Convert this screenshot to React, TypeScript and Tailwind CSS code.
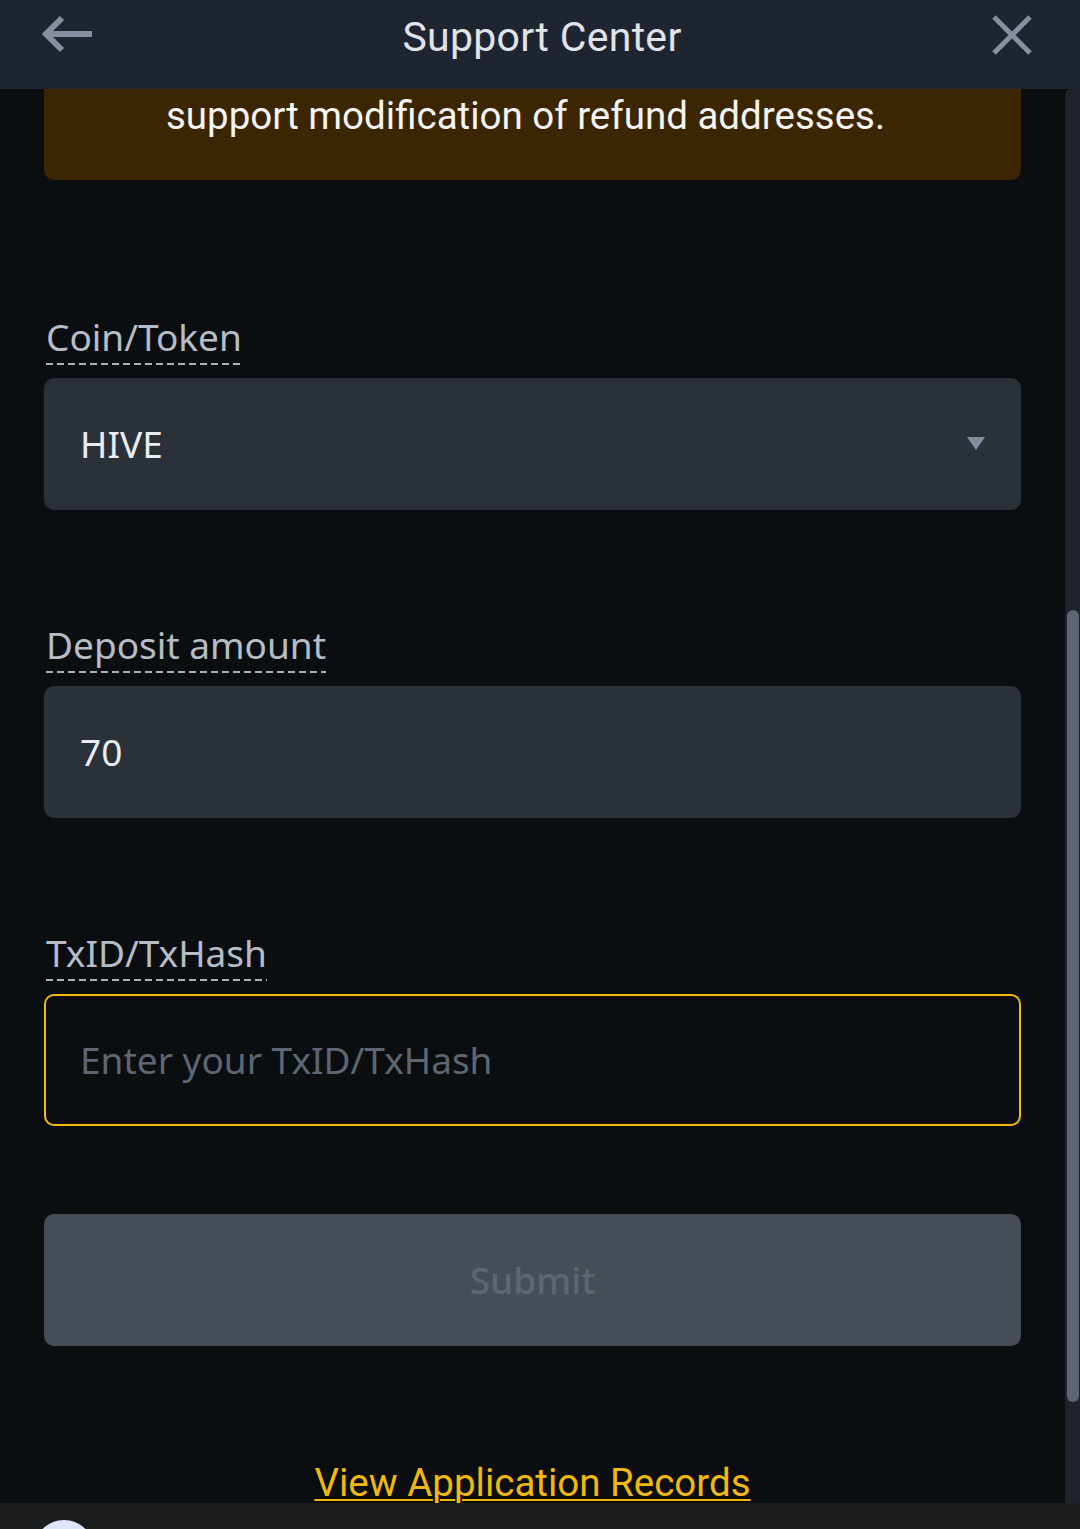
import React from "react";

const body = { fontFamily: '"Noto Sans", "Open Sans", sans-serif' };
const cond = { fontFamily: 'Roboto, "Liberation Sans", sans-serif' };

function Label({ text }: { text: string }) {
  return (
    <div className="ml-[2px] w-fit flex flex-col">
      <div className="text-[37px] leading-[44px] text-[#b7bdc6]" style={body}>
        {text}
      </div>
      <div className="mt-[4px] h-[2px] w-full bg-[repeating-linear-gradient(to_right,#aab0b9_0_7px,transparent_7px_11px)]" />
    </div>
  );
}

export default function App() {
  return (
    <div className="w-[1080px] h-[1529px] bg-[#0b0e11] flex flex-col overflow-hidden">
      <header className="h-[89px] shrink-0 bg-[#1e2530] flex items-start justify-between pl-[40px] pr-[46px] pt-[14px]">
        <svg width="54" height="42" viewBox="0 0 54 42">
          <path d="M22 4 L6 20 L22 36 M6 20 H52" fill="none" stroke="#858fa0" strokeWidth="6" />
        </svg>
        <div className="text-[41px] leading-[48px] text-[#e0e3e7] tracking-[0.3px] -mt-[1px]" style={cond}>
          Support Center
        </div>
        <svg width="44" height="44" viewBox="0 0 44 44" className="-mt-[1px]">
          <path d="M4 4 L40 40 M40 4 L4 40" fill="none" stroke="#858fa0" strokeWidth="5" />
        </svg>
      </header>
      <div className="h-[1414px] shrink-0 flex overflow-hidden">
        <main className="w-[1065px] px-[44px] flex flex-col">
          <div className="h-[91px] shrink-0 bg-[#3c2601] rounded-b-[10px] pt-[5px]">
            <div className="text-center text-[38.5px] leading-[44px] text-[#f5f5f5] pr-[14px]" style={cond}>
              support modification of refund addresses.
            </div>
          </div>
          <div className="mt-[135px]">
            <Label text="Coin/Token" />
          </div>
          <div className="mt-[13px] h-[132px] shrink-0 rounded-[10px] bg-[#2b3139] flex items-center justify-between pl-[36px] pr-[36px]">
            <span className="text-[37px] text-[#eaecef]" style={body}>HIVE</span>
            <svg width="18" height="14" viewBox="0 0 18 14">
              <path d="M0 0 H18 L9 13 Z" fill="#848e9c" />
            </svg>
          </div>
          <div className="mt-[113px]">
            <Label text="Deposit amount" />
          </div>
          <div className="mt-[13px] h-[132px] shrink-0 rounded-[10px] bg-[#2b3139] flex items-center pl-[36px]">
            <span className="text-[37px] text-[#eaecef]" style={body}>70</span>
          </div>
          <div className="mt-[113px]">
            <Label text="TxID/TxHash" />
          </div>
          <div className="mt-[13px] h-[132px] shrink-0 rounded-[10px] border-2 border-[#f0b90b] flex items-center pl-[34px]">
            <span className="text-[37px] text-[#5e6673]" style={body}>Enter your TxID/TxHash</span>
          </div>
          <div className="mt-[88px] h-[132px] shrink-0 rounded-[10px] bg-[#474d57] flex items-center justify-center">
            <span className="text-[37px] font-medium text-[#5e6673]" style={body}>Submit</span>
          </div>
          <div className="mt-[115px] flex justify-center shrink-0">
            <span className="text-[38.5px] leading-[44px] text-[#f0b90b] underline underline-offset-[3px] decoration-2" style={cond}>
              View Application Records
            </span>
          </div>
        </main>
        <div className="w-[15px] bg-[#1f242c] rounded-tl-[6px] flex flex-col">
          <div className="mt-[521px] ml-[2px] w-[12px] h-[792px] shrink-0 rounded-full bg-[#5e6673]" />
        </div>
      </div>
      <div className="flex-1 bg-[#1c1d1f] relative overflow-hidden">
        <div className="absolute left-[34px] top-[17px] w-[60px] h-[60px] rounded-full bg-[#dde6ff]" />
      </div>
    </div>
  );
}
